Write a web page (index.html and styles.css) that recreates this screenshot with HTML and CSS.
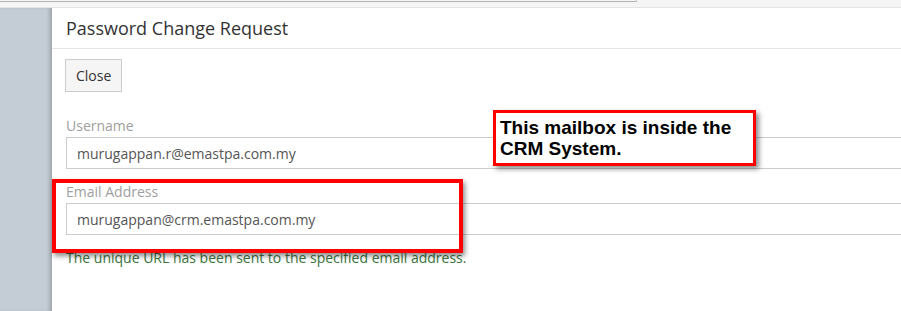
FILE: index.html
```html
<!DOCTYPE html>
<html lang="en">
<head>
  <meta charset="UTF-8">
  <meta name="viewport" content="width=device-width, initial-scale=1.0">
  <title>Password Change Request</title>
  <link rel="stylesheet" href="styles.css">
</head>
<body>
  <div class="topbar">
    <div class="topbar-line"></div>
  </div>
  <div class="layout">
    <aside class="sidebar"></aside>
    <div class="modal">
      <div class="modal-header">
        <h4 class="modal-title">Password Change Request</h4>
      </div>
      <div class="modal-body">
        <button class="btn">Close</button>
        <div class="form-group">
          <label for="username">Username</label>
          <input id="username" class="form-control" type="text" value="murugappan.r@emastpa.com.my" readonly>
        </div>
        <div class="form-group">
          <label for="email">Email Address</label>
          <input id="email" class="form-control" type="text" value="murugappan@crm.emastpa.com.my" readonly>
        </div>
        <p class="help-success">The unique URL has been sent to the specified email address.</p>
      </div>
    </div>

    <!-- annotations drawn over the screenshot -->
    <div class="highlight"></div>
    <div class="callout">This mailbox is inside the<br>CRM System.</div>
  </div>
</body>
</html>
```

FILE: styles.css
```css
/* styles.css */
body {
  margin: 0;
  padding: 0;
  overflow: hidden;
  font-family: "Open Sans", "Noto Sans", Arial, sans-serif;
  font-size: 14px;
  color: #333;
  background: #fff;
}

.topbar {
  height: 7px;
  background: #f5f5f5;
  border-bottom: 1px solid #e3e3e3;
}

.topbar-line {
  width: 636px;
  height: 1px;
  border-bottom: 1px solid #b4b4b4;
  border-right: 1px solid #c8c8c8;
}

.layout {
  position: relative;
  display: flex;
  height: 303px;
  overflow: hidden;
}

.sidebar {
  flex: none;
  width: 52px;
  background: #c4ccd6;
  box-shadow: inset -4px 0 4px -2px rgba(0, 0, 0, 0.22);
}

.modal {
  flex: none;
  width: 880px;
  background: #fff;
}

.modal-header {
  padding: 9px 14px;
  border-bottom: 1px solid #e5e5e5;
}

.modal-title {
  margin: 0;
  font-size: 18px;
  line-height: 22px;
  font-weight: normal;
  color: #333;
}

.modal-body {
  padding: 10px 14px;
}

.btn {
  display: block;
  height: 33px;
  margin-left: -1px;
  padding: 0 10px;
  font-family: inherit;
  font-size: 14px;
  line-height: 19px;
  color: #333;
  background: #f5f5f5;
  border: 1px solid #ccc;
  border-radius: 0;
}

.form-group {
  margin-top: 24px;
}

.form-group + .form-group {
  margin-top: 13px;
}

.form-group label {
  display: block;
  margin-bottom: 1px;
  line-height: 20px;
  color: #a0a0a0;
}

.form-control {
  display: block;
  box-sizing: border-box;
  width: 100%;
  height: 32px;
  margin: 0;
  padding: 0 10px;
  font-family: inherit;
  font-size: 14px;
  color: #555;
  background: #fff;
  border: 1px solid #ccc;
  border-radius: 0;
  outline: none;
}

.help-success {
  margin: 13px 0 0;
  line-height: 20px;
  color: #3c763d;
}

.highlight {
  position: absolute;
  left: 52px;
  top: 171px;
  width: 411px;
  height: 74px;
  box-sizing: border-box;
  border: 4px solid #ff0000;
  box-shadow: 2px 3px 5px rgba(0, 0, 0, 0.45);
}

.callout {
  position: absolute;
  left: 493px;
  top: 102px;
  width: 263px;
  height: 56px;
  box-sizing: border-box;
  padding: 4px 4px;
  font-family: "Liberation Sans", Arial, sans-serif;
  font-size: 19px;
  font-weight: bold;
  line-height: 21px;
  color: #000;
  background: #fff;
  border: 3px solid #ff0000;
  box-shadow: 3px 3px 5px rgba(0, 0, 0, 0.45);
}
```
